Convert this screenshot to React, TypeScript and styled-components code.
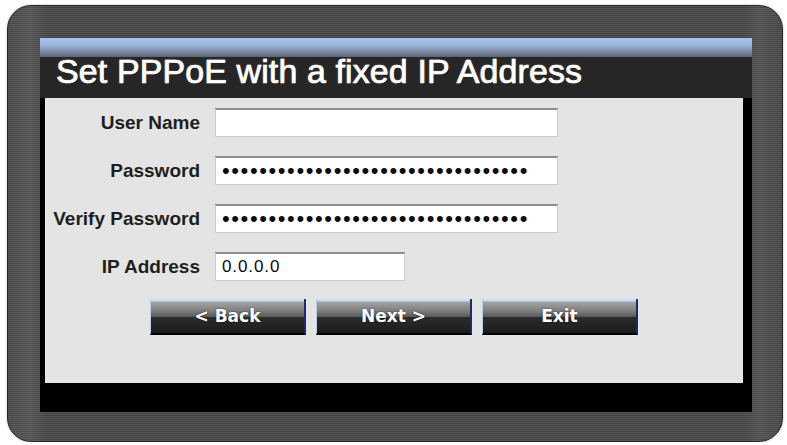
import React from "react";
import styled, { createGlobalStyle } from "styled-components";

const GlobalStyle = createGlobalStyle`
  html, body { margin: 0; padding: 0; background: #ffffff; }
  body { font-family: "Liberation Sans", Arial, sans-serif; }
`;

const Page = styled.div`
  padding: 5px 0 0 7px;
`;

const Frame = styled.div`
  box-sizing: border-box;
  width: 776px;
  height: 437px;
  border-radius: 24px;
  border: 1px solid #262626;
  padding: 32px 30px 29px 32px;
  background:
    linear-gradient(to right, rgba(255,255,255,0.02), rgba(255,255,255,0.08) 3%, rgba(255,255,255,0) 5%, rgba(255,255,255,0) 95%, rgba(255,255,255,0.06) 97%, rgba(0,0,0,0)),
    repeating-linear-gradient(to bottom, #565656 0px, #565656 1px, #414141 1px, #414141 2px);
  box-shadow: 0 0 2px rgba(0, 0, 0, 0.35);
`;

const Panel = styled.div`
  display: flex;
  flex-direction: column;
  height: 100%;
  background: #000000;
`;

const BlueBar = styled.div`
  height: 19px;
  background: linear-gradient(to bottom, #a9c7f2 0%, #9bb6df 35%, #7f8ea8 70%, #5d6270 100%);
`;

const TitleBand = styled.h1`
  box-sizing: border-box;
  margin: 0;
  height: 41px;
  padding-left: 16px;
  background: #262626;
  color: #ffffff;
  font-family: "Liberation Sans", Arial, sans-serif;
  font-weight: 400;
  font-size: 34px;
  line-height: 28px;
  letter-spacing: 0.1px;
  white-space: nowrap;
  -webkit-text-stroke: 0.7px #ffffff;
  text-shadow: 0 0 2px rgba(255, 255, 255, 0.45), 1px 1px 1px rgba(0, 0, 0, 0.8);
`;

const Content = styled.div`
  flex: 1;
  margin: 0 9px 29px 5px;
  padding-top: 10px;
  background: #e4e4e4;
`;

const Form = styled.div`
  display: grid;
  grid-template-columns: 155px auto;
  column-gap: 15px;
  row-gap: 19px;
  align-items: center;
  justify-items: start;
`;

const Label = styled.label`
  justify-self: end;
  font-family: "Liberation Sans", Arial, sans-serif;
  font-weight: 700;
  font-size: 19px;
  color: #1e1e1e;
  white-space: nowrap;
  line-height: 22px;
`;

const Field = styled.input<{ $w: number; $masked?: boolean }>`
  box-sizing: border-box;
  width: ${(p) => p.$w}px;
  height: 29px;
  margin: 0;
  padding: 0 6px;
  border: 1px solid #cbcbcb;
  border-top: 2px solid #8d8d8d;
  border-radius: 0;
  background: #ffffff;
  outline: none;
  color: #0a0a0a;
  font-family: "Liberation Sans", Arial, sans-serif;
  font-size: ${(p) => (p.$masked ? "22px" : "17px")};
  letter-spacing: ${(p) => (p.$masked ? "1.6px" : "0.9px")};
`;

const ButtonRow = styled.div`
  display: flex;
  justify-content: center;
  gap: 10px;
  margin-top: 18px;
`;

const NavButton = styled.button`
  box-sizing: border-box;
  width: 156px;
  height: 36px;
  margin: 0;
  padding: 0;
  border: none;
  border-left: 1px solid #b9cde9;
  border-right: 2px solid #1e2a6e;
  border-bottom: 2px solid #000000;
  background: linear-gradient(
    to bottom,
    #d3e4fa 0px,
    #c4d6ee 2px,
    #a4a4a4 3px,
    #7e7e7e 35%,
    #5a5a5a 52%,
    #2c2c2c 53%,
    #232323 80%,
    #1a1a1a 100%
  );
  color: #ffffff;
  font-family: "DejaVu Sans", Verdana, sans-serif;
  font-weight: 700;
  font-size: 17px;
  line-height: 34px;
  text-align: center;
  text-shadow: 0 0 2px rgba(0, 0, 0, 0.6);
  cursor: pointer;
`;

const dots = "x".repeat(33);

export default function App() {
  return (
    <>
      <GlobalStyle />
      <Page>
        <Frame>
          <Panel>
            <BlueBar />
            <TitleBand>Set PPPoE with a fixed IP Address</TitleBand>
            <Content>
              <Form>
                <Label htmlFor="user">User Name</Label>
                <Field id="user" type="text" $w={343} defaultValue="" />
                <Label htmlFor="pass">Password</Label>
                <Field id="pass" type="password" $w={343} $masked defaultValue={dots} />
                <Label htmlFor="verify">Verify Password</Label>
                <Field id="verify" type="password" $w={343} $masked defaultValue={dots} />
                <Label htmlFor="ip">IP Address</Label>
                <Field id="ip" type="text" $w={190} defaultValue="0.0.0.0" />
              </Form>
              <ButtonRow>
                <NavButton type="button">&lt; Back</NavButton>
                <NavButton type="button">Next &gt;</NavButton>
                <NavButton type="button">Exit</NavButton>
              </ButtonRow>
            </Content>
          </Panel>
        </Frame>
      </Page>
    </>
  );
}
